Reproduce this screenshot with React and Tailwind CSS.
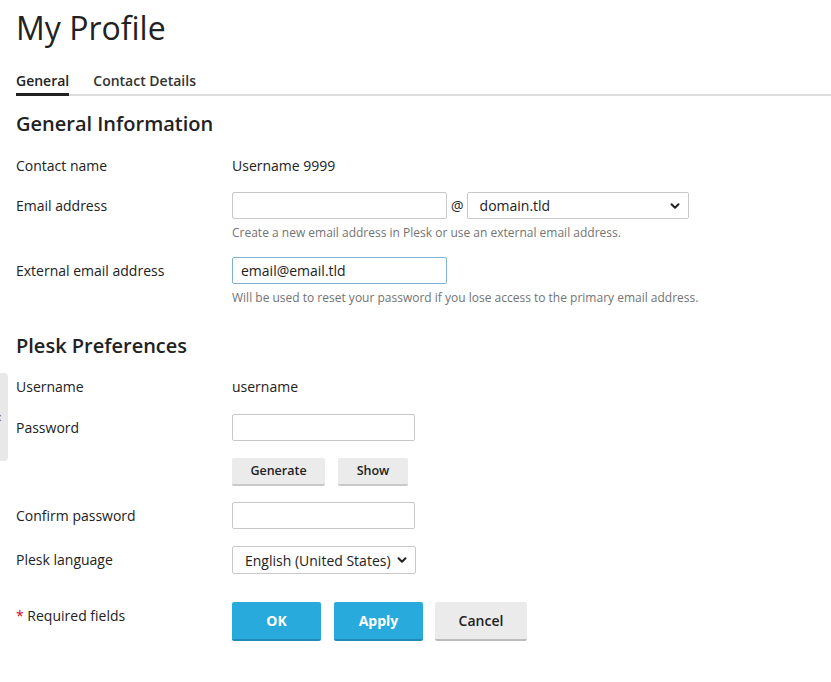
import React from "react";

const Chevron = () => (
  <svg width="10" height="10" viewBox="0 0 10 10" className="absolute right-[9px] top-1/2 -translate-y-1/2 pointer-events-none">
    <path d="M1.5 3.2 L5 6.7 L8.5 3.2" fill="none" stroke="#222" strokeWidth="2" strokeLinecap="round" strokeLinejoin="round" />
  </svg>
);

const Label = ({ children }) => (
  <div className="w-[216px] shrink-0 leading-[27px] text-[14px] text-[#222]">{children}</div>
);

const Help = ({ children }) => (
  <div className="mt-[6px] text-[12px] leading-[16px] text-[#737373]">{children}</div>
);

const GrayBtn = ({ children, w }) => (
  <button className={`${w} h-[28px] bg-[#ebebeb] border-b-2 border-[#c9c9c9] rounded-[2px] text-[12.5px] font-semibold text-[#222]`}>
    {children}
  </button>
);

export default function App() {
  return (
    <div className="relative min-h-[682px] bg-white text-[#222]" style={{ fontFamily: '"Open Sans", "Liberation Sans", sans-serif' }}>
      {/* side handle */}
      <div className="absolute left-0 top-[373px] w-[8px] h-[88px] bg-[#e8e8e8] rounded-r-[4px] flex items-center">
        <span className="text-[10px] leading-none text-[#555] -ml-[1px]">:</span>
      </div>

      <div className="pl-4">
        <h1 className="pt-[5px] text-[32px] leading-[46px] font-normal text-[#222]">My Profile</h1>

        <div className="mt-[20px] flex gap-6 border-b-2 border-[#dcdcdc]">
          <div className="text-[14px] font-semibold leading-[20px] pb-[2px] border-b-[3px] border-[#222] -mb-[2px]">General</div>
          <div className="text-[14px] font-semibold leading-[20px] text-[#333]">Contact Details</div>
        </div>

        <h2 className="mt-[14px] text-[20px] leading-[28px] font-semibold">General Information</h2>

        <div className="mt-[14px] flex">
          <Label>Contact name</Label>
          <div className="leading-[27px] text-[14px]">Username 9999</div>
        </div>

        <div className="mt-[13px] flex">
          <Label>Email address</Label>
          <div>
            <div className="flex items-center">
              <input className="w-[215px] h-[27px] border border-[#c8c8c8] rounded-[2px] px-2 text-[14px] outline-none" />
              <span className="ml-[4px] mr-[3px] text-[14px]">@</span>
              <div className="relative">
                <select className="appearance-none w-[222px] h-[27px] border border-[#c8c8c8] rounded-[2px] pl-[12px] text-[14px] bg-white outline-none">
                  <option>domain.tld</option>
                </select>
                <Chevron />
              </div>
            </div>
            <Help>Create a new email address in Plesk or use an external email address.</Help>
          </div>
        </div>

        <div className="mt-[16px] flex">
          <Label>External email address</Label>
          <div>
            <input defaultValue="email@email.tld" className="w-[215px] h-[27px] border border-[#7fb3d1] rounded-[2px] px-2 text-[14px] outline-none" />
            <Help>Will be used to reset your password if you lose access to the primary email address.</Help>
          </div>
        </div>

        <h2 className="mt-[26px] text-[20px] leading-[28px] font-semibold">Plesk Preferences</h2>

        <div className="mt-[13px] flex">
          <Label>Username</Label>
          <div className="leading-[27px] text-[14px]">username</div>
        </div>

        <div className="mt-[14px] flex">
          <Label>Password</Label>
          <div>
            <input type="password" className="w-[183px] h-[27px] border border-[#c8c8c8] rounded-[2px] px-2 text-[14px] outline-none" />
            <div className="mt-[17px] flex gap-[13px]">
              <GrayBtn w="w-[93px]">Generate</GrayBtn>
              <GrayBtn w="w-[70px]">Show</GrayBtn>
            </div>
          </div>
        </div>

        <div className="mt-[16px] flex">
          <Label>Confirm password</Label>
          <input type="password" className="w-[183px] h-[27px] border border-[#c8c8c8] rounded-[2px] px-2 text-[14px] outline-none" />
        </div>

        <div className="mt-[17px] flex">
          <Label>Plesk language</Label>
          <div className="relative">
            <select className="appearance-none w-[184px] h-[28px] border border-[#c8c8c8] rounded-[2px] pl-[12px] text-[14px] bg-white outline-none">
              <option>English (United States)</option>
            </select>
            <Chevron />
          </div>
        </div>

        <div className="mt-[28px] flex">
          <div className="w-[216px] shrink-0 text-[14px] leading-[27px]">
            <span className="text-[#d0021b]">*</span> Required fields
          </div>
          <div className="flex gap-[13px]">
            <button className="w-[89px] h-[39px] bg-[#28aadc] border-b-2 border-[#1f8bb8] rounded-[2px] text-white text-[14px] font-bold">OK</button>
            <button className="w-[89px] h-[39px] bg-[#28aadc] border-b-2 border-[#1f8bb8] rounded-[2px] text-white text-[14px] font-bold">Apply</button>
            <button className="w-[92px] h-[39px] bg-[#ebebeb] border-b-2 border-[#bcbcbc] rounded-[2px] text-[#222] text-[14px] font-semibold -ml-px">Cancel</button>
          </div>
        </div>
      </div>
    </div>
  );
}
